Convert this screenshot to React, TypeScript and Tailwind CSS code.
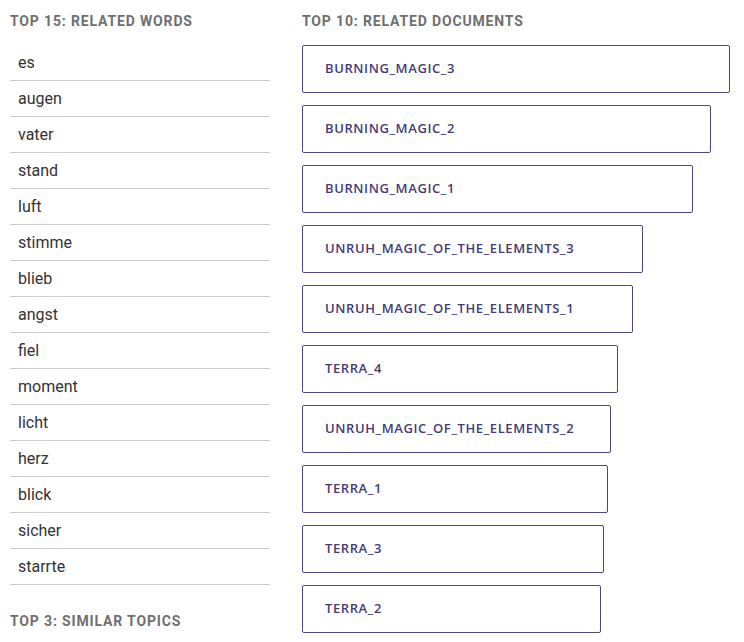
const WORDS = [
  'es', 'augen', 'vater', 'stand', 'luft', 'stimme', 'blieb', 'angst',
  'fiel', 'moment', 'licht', 'herz', 'blick', 'sicher', 'starrte',
];

const DOCS = [
  { name: 'BURNING_MAGIC_3', width: 428 },
  { name: 'BURNING_MAGIC_2', width: 409 },
  { name: 'BURNING_MAGIC_1', width: 391 },
  { name: 'UNRUH_MAGIC_OF_THE_ELEMENTS_3', width: 341 },
  { name: 'UNRUH_MAGIC_OF_THE_ELEMENTS_1', width: 331 },
  { name: 'TERRA_4', width: 316 },
  { name: 'UNRUH_MAGIC_OF_THE_ELEMENTS_2', width: 309 },
  { name: 'TERRA_1', width: 306 },
  { name: 'TERRA_3', width: 302 },
  { name: 'TERRA_2', width: 299 },
];

function Heading({ children }: { children: React.ReactNode }) {
  return (
    <h2 className="text-[14px] leading-[16px] font-bold tracking-[0.85px] text-[#6f6f72] font-['Roboto',sans-serif]">
      {children}
    </h2>
  );
}

export default function App() {
  return (
    <div className="w-[744px] h-[642px] overflow-hidden bg-white flex pl-[10px] pt-[13px]">
      <div className="w-[260px] flex flex-col">
        <Heading>TOP 15: RELATED WORDS</Heading>
        <ul className="mt-[16px]">
          {WORDS.map((w) => (
            <li
              key={w}
              className="h-[36px] border-b border-[#cccccc] pl-[8px] flex items-center text-[16px] text-[#333] font-['Roboto',sans-serif]"
            >
              {w}
            </li>
          ))}
        </ul>
        <div className="mt-[28px]">
          <Heading>TOP 3: SIMILAR TOPICS</Heading>
        </div>
      </div>

      <div className="ml-[32px] flex flex-col">
        <Heading>TOP 10: RELATED DOCUMENTS</Heading>
        <div className="mt-[16px] flex flex-col gap-[12px]">
          {DOCS.map((d) => (
            <div
              key={d.name}
              style={{ width: d.width }}
              className="h-[48px] border border-[#4d4784] rounded-[2px] flex items-center pl-[22px] text-[13px] font-semibold tracking-[0.6px] text-[#433c78] font-['Open_Sans',sans-serif]"
            >
              {d.name}
            </div>
          ))}
        </div>
      </div>
    </div>
  );
}
